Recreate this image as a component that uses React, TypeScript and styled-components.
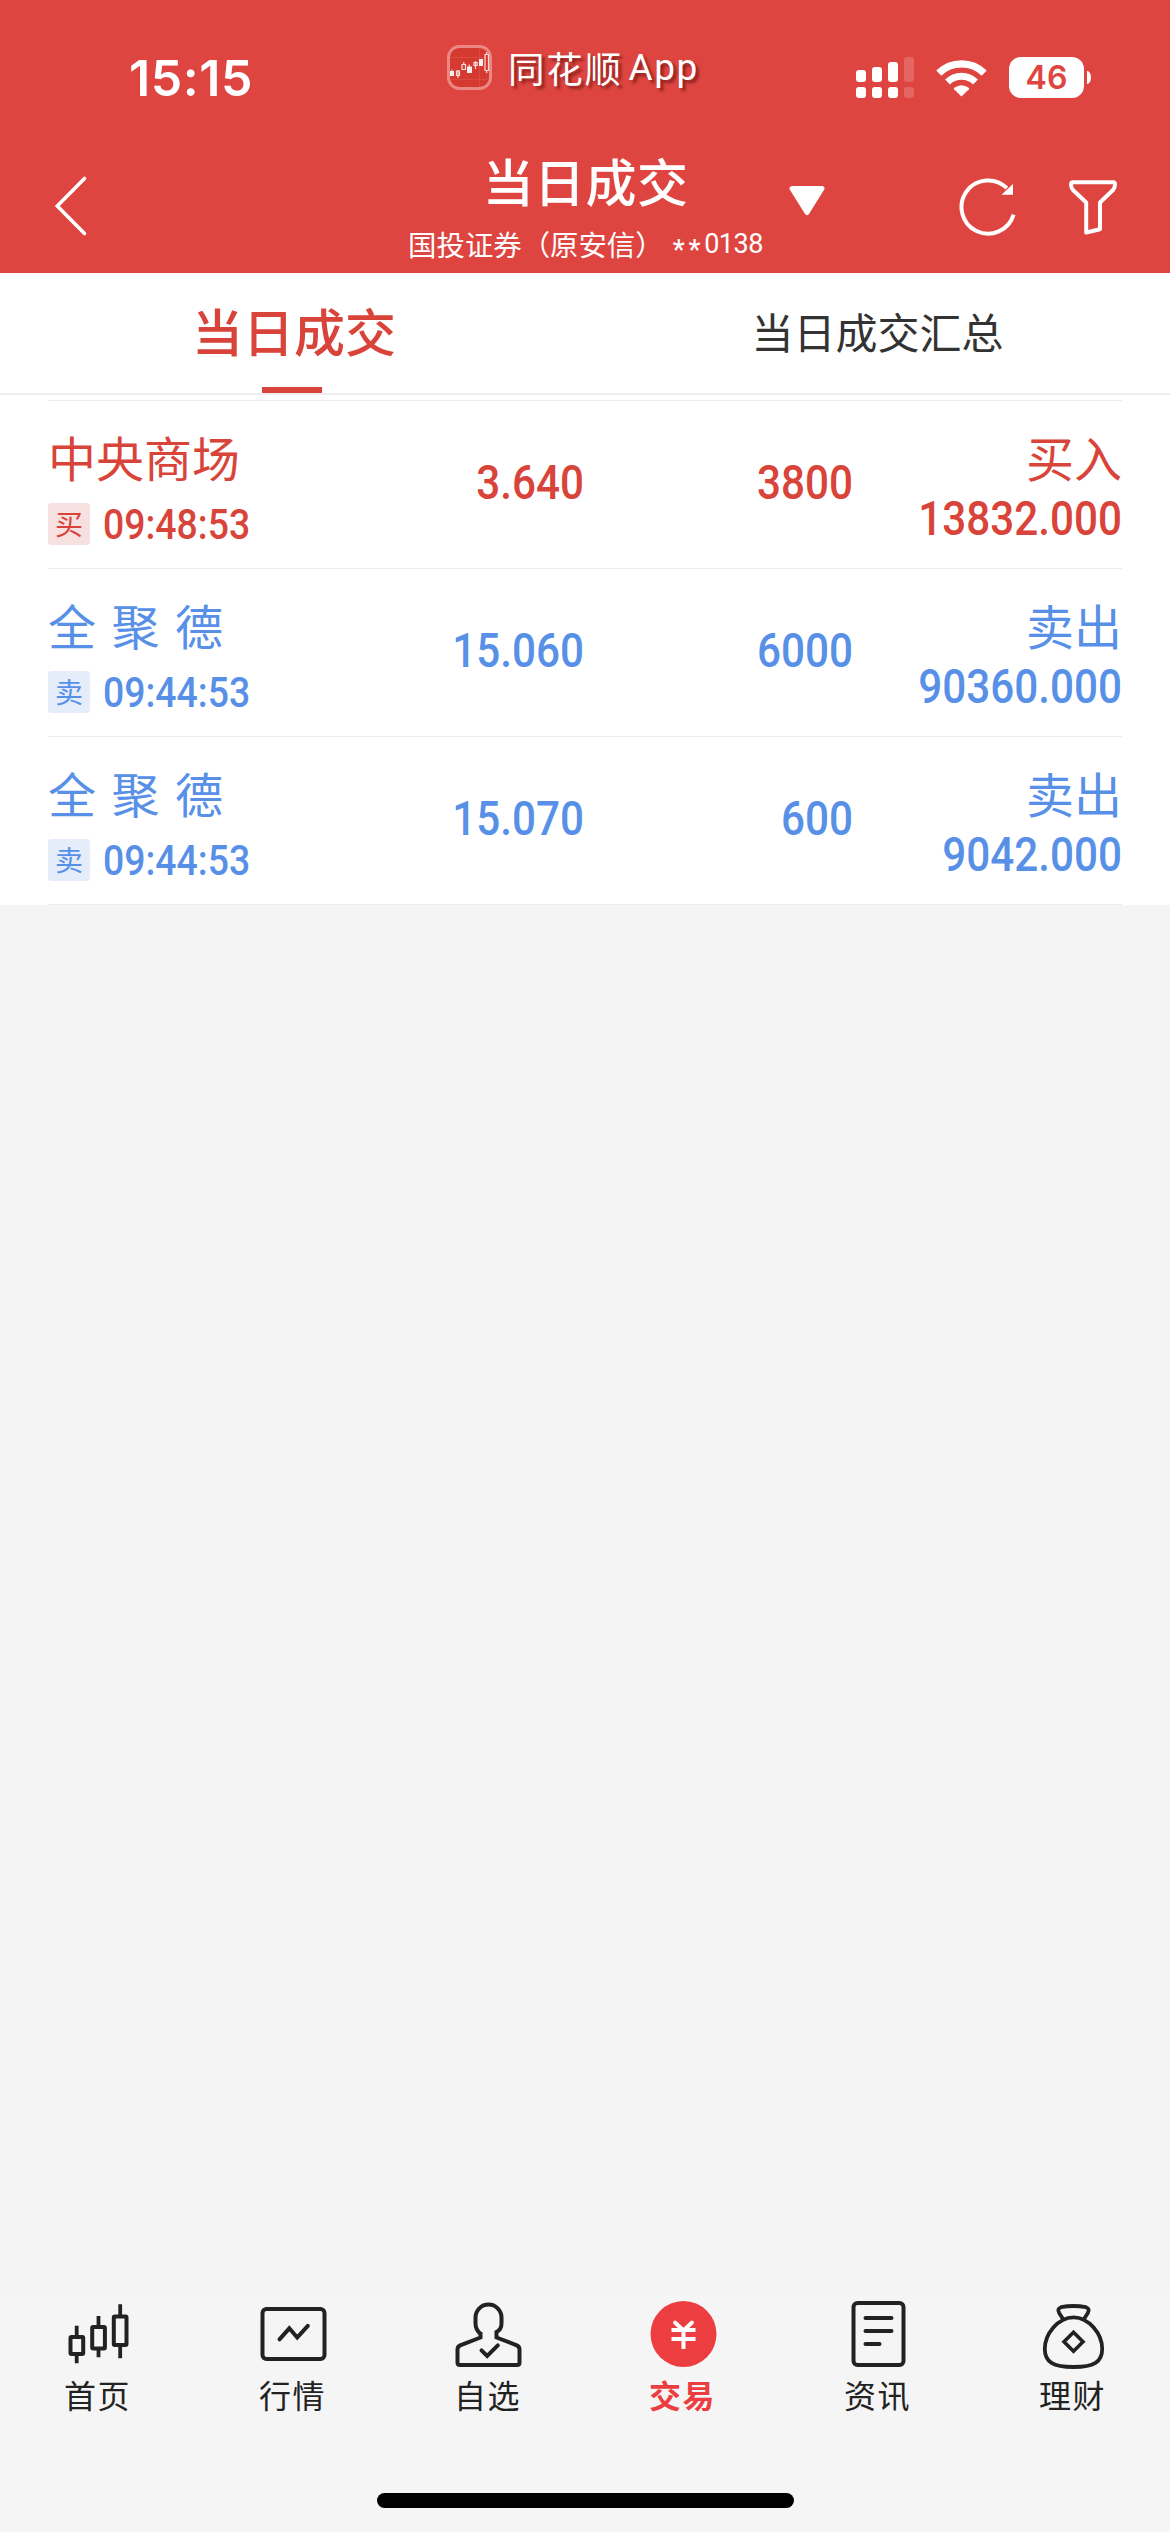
import React from 'react';
import styled, { createGlobalStyle } from 'styled-components';

const CJK = '"Noto Sans CJK SC", sans-serif';
const DIGITS = 'Roboto, "Noto Sans CJK SC", sans-serif';
const RED = '#d9443a';
const BLUE = '#5890e8';

const GlobalStyle = createGlobalStyle`
  * { box-sizing: border-box; }
  body { margin: 0; background: #f4f4f4; font-family: ${CJK}; }
  svg { display: block; flex: none; }
`;

const Screen = styled.div`
  width: 1170px;
  height: 2532px;
  display: flex;
  flex-direction: column;
  background: #f4f4f4;
  overflow: hidden;
`;

const Header = styled.header`
  height: 273px;
  background: #de4540;
  color: #fff;
`;

const StatusBar = styled.div`
  height: 120px;
  display: grid;
  grid-template-columns: 447px 409px 1fr;
  align-items: start;
`;

const Clock = styled.div`
  margin: 48px 0 0 129px;
  font: 600 50px/60px Inter, sans-serif;
  letter-spacing: 0.6px;
`;

const Brand = styled.div`
  display: flex;
  margin-top: 45px;
  height: 45px;
  align-items: center;
`;

const BrandName = styled.span`
  margin-left: 16px;
  font: 400 36.5px/44px ${CJK};
  letter-spacing: 1.7px;
  text-shadow: 3px 3px 3px rgba(70, 0, 0, 0.55);
`;

const BrandSuffix = styled.span`
  margin-left: 6px;
  font: 400 37px/44px ${DIGITS};
  letter-spacing: 1.5px;
  text-shadow: 3px 3px 3px rgba(70, 0, 0, 0.55);
`;

const Indicators = styled.div`
  display: flex;
  align-items: center;
  margin-top: 57px;
  height: 41px;
`;

const Battery = styled.div`
  margin-left: 22px;
  width: 75px;
  height: 41px;
  border-radius: 12px;
  background: #fff;
  color: #de4540;
  text-align: center;
  font: 600 32px/42px Inter, sans-serif;
`;

const BatteryTip = styled.div`
  margin-left: 3px;
  width: 4px;
  height: 13px;
  border-radius: 0 4px 4px 0 / 0 7px 7px 0;
  background: #fff;
`;

const NavBar = styled.div`
  height: 153px;
  display: grid;
  grid-template-columns: 400px 371px 1fr;
  align-items: start;
`;

const BackIcon = styled.svg`
  margin: 54px 0 0 52px;
`;

const TitleBlock = styled.div`
  display: flex;
  flex-direction: column;
  align-items: center;
  padding-top: 30px;
`;

const Title = styled.h1`
  margin: 0;
  font: 500 51px/60px ${CJK};
  letter-spacing: 0.4px;
`;

const Account = styled.div`
  display: flex;
  margin-top: 17px;
  font: 400 28.4px/34px ${CJK};
  white-space: nowrap;
`;

const Mask = styled.span`
  margin-left: 9px;
  padding-top: 6px;
  font: 500 27px/34px ${DIGITS};
  letter-spacing: 3.8px;
`;

const AccountNo = styled.span`
  font: 400 27px/34px ${DIGITS};
  letter-spacing: -0.5px;
`;

const NavActions = styled.div`
  display: flex;
  padding: 56px 0 0 18px;
`;

const RefreshIcon = styled.svg`
  margin-left: 132px;
`;

const FilterIcon = styled.svg`
  margin-left: 52px;
`;

const Tabs = styled.nav`
  display: flex;
  height: 122px;
  background: #fff;
  border-bottom: 2px solid #eee;
`;

const Tab = styled.div<{ $active?: boolean }>`
  position: relative;
  width: 585px;
  padding-left: ${(p) => (p.$active ? 3 : 0)}px;
  text-align: center;
  color: ${(p) => (p.$active ? RED : '#333')};
  font: ${(p) => (p.$active ? '500 51px/114px' : '400 42px/116px')} ${CJK};
  &::after {
    content: '';
    display: ${(p) => (p.$active ? 'block' : 'none')};
    position: absolute;
    left: 262px;
    bottom: 0;
    width: 60px;
    height: 6px;
    background: ${RED};
  }
`;

const List = styled.main`
  padding: 5px 48px 0;
  background: #fff;
`;

const Row = styled.div<{ $buy: boolean }>`
  height: 168px;
  display: grid;
  grid-template-columns: 248px 288px 269px 269px;
  color: ${(p) => (p.$buy ? RED : BLUE)};
  border-bottom: 1px solid #ededed;
  &:first-child {
    height: 169px;
    border-top: 1px solid #ededed;
  }
`;

const Name = styled.div`
  padding-top: 27px;
  font: 400 48px/56px ${CJK};
  word-spacing: 4.8px;
  white-space: nowrap;
`;

const Stamp = styled.div`
  display: flex;
  align-items: center;
  margin-top: 19px;
`;

const Badge = styled.span<{ $buy: boolean }>`
  width: 42px;
  height: 42px;
  border-radius: 3px;
  background: ${(p) => (p.$buy ? '#f7e0e0' : '#e5edfa')};
  text-align: center;
  font: 400 28px/40px ${CJK};
`;

const Time = styled.span`
  margin-left: 13px;
  font: 500 42px/41px ${DIGITS};
  transform: scaleX(0.89);
  transform-origin: left center;
`;

const Figure = styled.div<{ $top: number }>`
  padding-top: ${(p) => p.$top}px;
  text-align: right;
  font: 500 48px/56px ${DIGITS};
  transform: scaleX(0.88);
  transform-origin: right center;
`;

const Side = styled(Name)`
  text-align: right;
`;

const TabBar = styled.footer`
  margin-top: auto;
  height: 238px;
  background: #f5f5f5;
  display: flex;
  flex-direction: column;
  align-items: center;
`;

const TabItems = styled.div`
  display: flex;
  width: 1170px;
  height: 199px;
`;

const TabItem = styled.div<{ $active?: boolean }>`
  width: 195px;
  padding-top: 4px;
  display: flex;
  flex-direction: column;
  align-items: center;
  color: ${(p) => (p.$active ? '#ec3e40' : '#222')};
`;

const TabLabel = styled.span<{ $active?: boolean }>`
  margin-top: 4px;
  font: ${(p) => (p.$active ? 700 : 400)} 32px/40px ${CJK};
  letter-spacing: 1.4px;
`;

const HomeIndicator = styled.div`
  width: 417px;
  height: 15px;
  border-radius: 8px;
  background: #000;
`;

const BrandIcon = () => (
  <svg width="45" height="45" viewBox="0 0 45 45">
    <rect x="1.5" y="1.5" width="42" height="42" rx="11" fill="#d5392f" stroke="#eb8883" strokeWidth="3" />
    <path d="M3 12.5H42M3 34.5H42M32.5 3V42" stroke="#db4a41" strokeWidth="1" />
    <g fill="#fff" opacity="0.92">
      <path d="M3 26H7V31H3zM20 21.5H25V28H20zM32 14H36V21H32z" />
      <path d="M5 24.5V31M22.3 19.5V28" stroke="#fff" />
    </g>
    <g fill="none" stroke="#f9dcda" strokeWidth="1.2">
      <path d="M9.5 26H12.5V30.5H9.5zM11 25V33M15 19.5H18.5V24.5H15zM16.8 17V20M27 17.5H30.2V20.5H27zM28.5 16V24M38 9.5H41.5V25.5H38zM39.7 7V10M39.7 25V28" />
    </g>
  </svg>
);

const Signal = () => (
  <svg width="58" height="41" viewBox="0 0 58 41" fill="#fff">
    <rect x="0" y="13" width="10" height="12" rx="3" />
    <rect x="16" y="10" width="10" height="15" rx="3" />
    <rect x="32" y="5" width="10" height="20" rx="3" />
    <rect x="48" y="0" width="10" height="25" rx="3" opacity="0.18" />
    <rect x="0" y="30" width="10" height="11" rx="3" />
    <rect x="16" y="30" width="10" height="11" rx="3" />
    <rect x="32" y="30" width="10" height="11" rx="3" />
    <rect x="48" y="30" width="10" height="11" rx="3" opacity="0.18" />
  </svg>
);

const WifiIcon = styled.svg`
  margin-left: 22px;
`;

const Wifi = () => (
  <WifiIcon width="51" height="38" viewBox="0 0 51 38" fill="none">
    <path d="M2.8 14.2A32.5 32.5 0 0 1 48.2 14.2" stroke="#fff" strokeWidth="7.2" />
    <path d="M11.5 23A20.2 20.2 0 0 1 39.5 23" stroke="#fff" strokeWidth="7" />
    <path d="M25.5 37.6L18 30.2Q17.6 29.4 18.3 28.8Q25.5 23.6 32.7 28.8Q33.4 29.4 33 30.2Z" fill="#fff" />
  </WifiIcon>
);

const Glyph = ({ children }: { children: React.ReactNode }) => (
  <svg width="72" height="72" viewBox="0 0 72 72" fill="none" stroke="currentColor" strokeWidth="4">
    {children}
  </svg>
);

const tabItems = [
  {
    label: '首页',
    icon: (
      <>
        <rect x="8.5" y="39" width="12.7" height="17" rx="1" />
        <rect x="30.2" y="29" width="12.7" height="21.5" rx="1" />
        <rect x="51.8" y="18.5" width="12.7" height="28.5" rx="1" />
        <path d="M14.7 27.7V38M14.7 57V65.3M36.5 18V28M36.5 51V59.3M58.2 6.3V17M58.2 48V60.3" strokeWidth="3.8" />
      </>
    ),
  },
  {
    label: '行情',
    icon: (
      <>
        <rect x="5.5" y="11" width="62" height="50" rx="4" />
        <path d="M22.5 41.3L32.3 30.3L40.2 39.5L50.8 27.8" strokeLinecap="round" />
      </>
    ),
  },
  {
    label: '自选',
    icon: (
      <>
        <path d="M28.5 34V39.5L8.2 47.3Q5.5 48.5 5.5 51.5V64.5Q5.5 67 8 67H65Q67.5 67 67.5 64.5V51.5Q67.5 48.5 64.8 47.3L44.5 39.5V34Q49.5 31.500 49.5 25.5V19.5A13 13 0 0 0 23.5 19.5V25.5Q23.5 31.5 28.5 36" />
        <path d="M29.5 52.3L35.2 58L45.8 47.3" strokeLinecap="round" />
      </>
    ),
  },
  {
    label: '交易',
    active: true,
    icon: (
      <>
        <circle cx="36.5" cy="36" r="33" fill="currentColor" stroke="none" />
        <path d="M28 24.5L36.5 32.5L45 24.5" stroke="#fff" strokeLinecap="round" />
        <path d="M24.5 32H48.5M24.5 41H48.5M36.5 32V51" stroke="#fff" />
      </>
    ),
  },
  {
    label: '资讯',
    icon: (
      <>
        <rect x="11.5" y="5" width="50" height="62" rx="4" />
        <path d="M23.5 20H49.5M23.5 33H49.5M23.5 46H37.5" strokeLinecap="round" />
      </>
    ),
  },
  {
    label: '理财',
    icon: (
      <>
        <path d="M36.5 19.3C21 19.3 7.8 36 7.8 51C7.8 64 16 69 36.5 69C57 69 65.2 64 65.2 51C65.2 36 52 19.3 36.5 19.3Z" strokeWidth="3.8" />
        <path d="M26.3 21.5L22.2 15Q19.8 10.7 24 9.2Q36.5 6.8 49 9.2Q53.2 10.7 50.8 15L46.7 21.5" strokeWidth="3.8" />
        <path d="M36.5 34.2L46 43.7L36.5 53.2L27 43.7Z" strokeWidth="3.6" />
      </>
    ),
  },
];

const trades = [
  { name: '中央商场', buy: true, time: '09:48:53', price: '3.640', qty: '3800', amount: '13832.000' },
  { name: '全 聚 德', buy: false, time: '09:44:53', price: '15.060', qty: '6000', amount: '90360.000' },
  { name: '全 聚 德', buy: false, time: '09:44:53', price: '15.070', qty: '600', amount: '9042.000' },
];

export default function App() {
  return (
    <Screen>
      <GlobalStyle />
      <Header>
        <StatusBar>
          <Clock>15:15</Clock>
          <Brand>
            <BrandIcon />
            <BrandName>同花顺</BrandName>
            <BrandSuffix>App</BrandSuffix>
          </Brand>
          <Indicators>
            <Signal />
            <Wifi />
            <Battery>46</Battery>
            <BatteryTip />
          </Indicators>
        </StatusBar>
        <NavBar>
          <BackIcon width="36" height="64" viewBox="0 0 36 64" fill="none" stroke="#fff" strokeWidth="3.6" strokeLinecap="round">
            <path d="M32.5 4.5L5.3 32L32.5 59.5" />
          </BackIcon>
          <TitleBlock>
            <Title>当日成交</Title>
            <Account>
              国投证券（原安信）
              <Mask>**</Mask>
              <AccountNo>0138</AccountNo>
            </Account>
          </TitleBlock>
          <NavActions>
            <svg width="36" height="60" viewBox="0 0 36 60">
              <path d="M3 12.5H33L18 36.5Z" fill="#fff" stroke="#fff" strokeWidth="5" strokeLinejoin="round" />
            </svg>
            <RefreshIcon width="60" height="62" viewBox="0 0 60 62" fill="none">
              <path d="M56.6 38.6A26.6 26.6 0 1 1 49.8 12.1" stroke="#fff" strokeWidth="4" />
              <path d="M56 8V18.8H44.5Z" fill="#fff" />
            </RefreshIcon>
            <FilterIcon width="48" height="62" viewBox="0 0 48 62" fill="none" stroke="#fff" strokeWidth="4" strokeLinejoin="round">
              <path d="M4 6.2H44Q46 6.2 46 8.5Q46 12 44 14L31 26.5V53.3L17.2 56.5V26.5L4 14Q2 12 2 8.5Q2 6.2 4 6.2Z" />
            </FilterIcon>
          </NavActions>
        </NavBar>
      </Header>
      <Tabs>
        <Tab $active>当日成交</Tab>
        <Tab>当日成交汇总</Tab>
      </Tabs>
      <List>
        {trades.map((t, i) => (
          <Row key={i} $buy={t.buy}>
            <div>
              <Name>{t.name}</Name>
              <Stamp>
                <Badge $buy={t.buy}>{t.buy ? '买' : '卖'}</Badge>
                <Time>{t.time}</Time>
              </Stamp>
            </div>
            <Figure $top={54}>{t.price}</Figure>
            <Figure $top={54}>{t.qty}</Figure>
            <div>
              <Side>{t.buy ? '买入' : '卖出'}</Side>
              <Figure $top={7}>{t.amount}</Figure>
            </div>
          </Row>
        ))}
      </List>
      <TabBar>
        <TabItems>
          {tabItems.map((t) => (
            <TabItem key={t.label} $active={t.active}>
              <Glyph>{t.icon}</Glyph>
              <TabLabel $active={t.active}>{t.label}</TabLabel>
            </TabItem>
          ))}
        </TabItems>
        <HomeIndicator />
      </TabBar>
    </Screen>
  );
}
